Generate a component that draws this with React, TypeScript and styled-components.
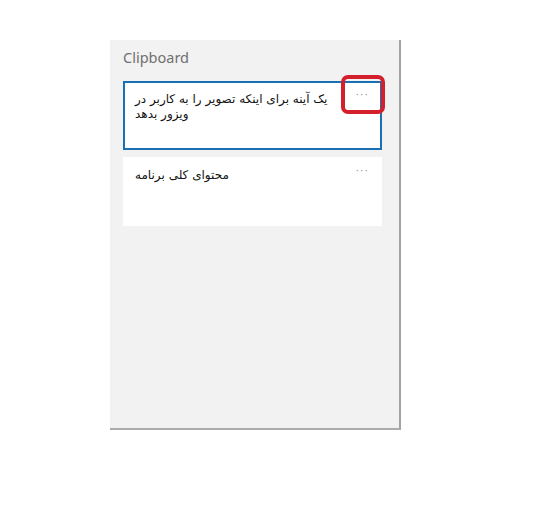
import React from "react";
import styled, { createGlobalStyle } from "styled-components";

const Global = createGlobalStyle`
  html, body { margin: 0; padding: 0; background: #ffffff; }
  body { font-family: "Noto Sans", "DejaVu Sans", sans-serif; }
`;

const Page = styled.div`
  padding: 40px 0 0 110px;
`;

const Panel = styled.section`
  box-sizing: border-box;
  width: 291px;
  height: 390px;
  background: #f2f2f2;
  border-right: 2px solid #a3a3a3;
  border-bottom: 2px solid #acacac;
  padding: 7px 17px 0 13px;
  display: flex;
  flex-direction: column;
`;

const Title = styled.h2`
  margin: 0 0 14px 0;
  font-family: "Noto Sans", "Open Sans", sans-serif;
  font-weight: 400;
  font-size: 14.5px;
  line-height: 20px;
  color: #707070;
`;

const List = styled.div`
  display: flex;
  flex-direction: column;
  gap: 7px;
`;

const Card = styled.div<{ $selected?: boolean }>`
  position: relative;
  box-sizing: border-box;
  height: 69px;
  background: #ffffff;
  border: 2px solid ${(p) => (p.$selected ? "#1b70b3" : "#ffffff")};
  display: flex;
  align-items: flex-start;
  padding: ${(p) => (p.$selected ? "9px 10px 0 10px" : "9px 10px 0 10px")};
`;

const Clip = styled.p`
  margin: 0;
  width: 212px;
  font-family: "DejaVu Sans", sans-serif;
  font-size: 12px;
  line-height: 15px;
  color: #111111;
  text-align: left;
`;

const More = styled.span`
  margin-left: auto;
  margin-right: 1px;
  margin-top: -4px;
  font-family: "DejaVu Sans", sans-serif;
  font-size: 11px;
  letter-spacing: 1px;
  color: #9a9a9a;
`;

const Highlight = styled.div`
  position: absolute;
  left: 216px;
  top: -8px;
  width: 44px;
  height: 39px;
  box-sizing: border-box;
  border: 4px solid #d4202c;
  border-radius: 7px;
`;

export default function App() {
  return (
    <>
      <Global />
      <Page>
        <Panel>
          <Title>Clipboard</Title>
          <List>
            <Card $selected>
              <Clip>یک آینه برای اینکه تصویر را به کاربر در ویزور بدهد</Clip>
              <More>···</More>
              <Highlight />
            </Card>
            <Card>
              <Clip>محتوای کلی برنامه</Clip>
              <More>···</More>
            </Card>
          </List>
        </Panel>
      </Page>
    </>
  );
}
